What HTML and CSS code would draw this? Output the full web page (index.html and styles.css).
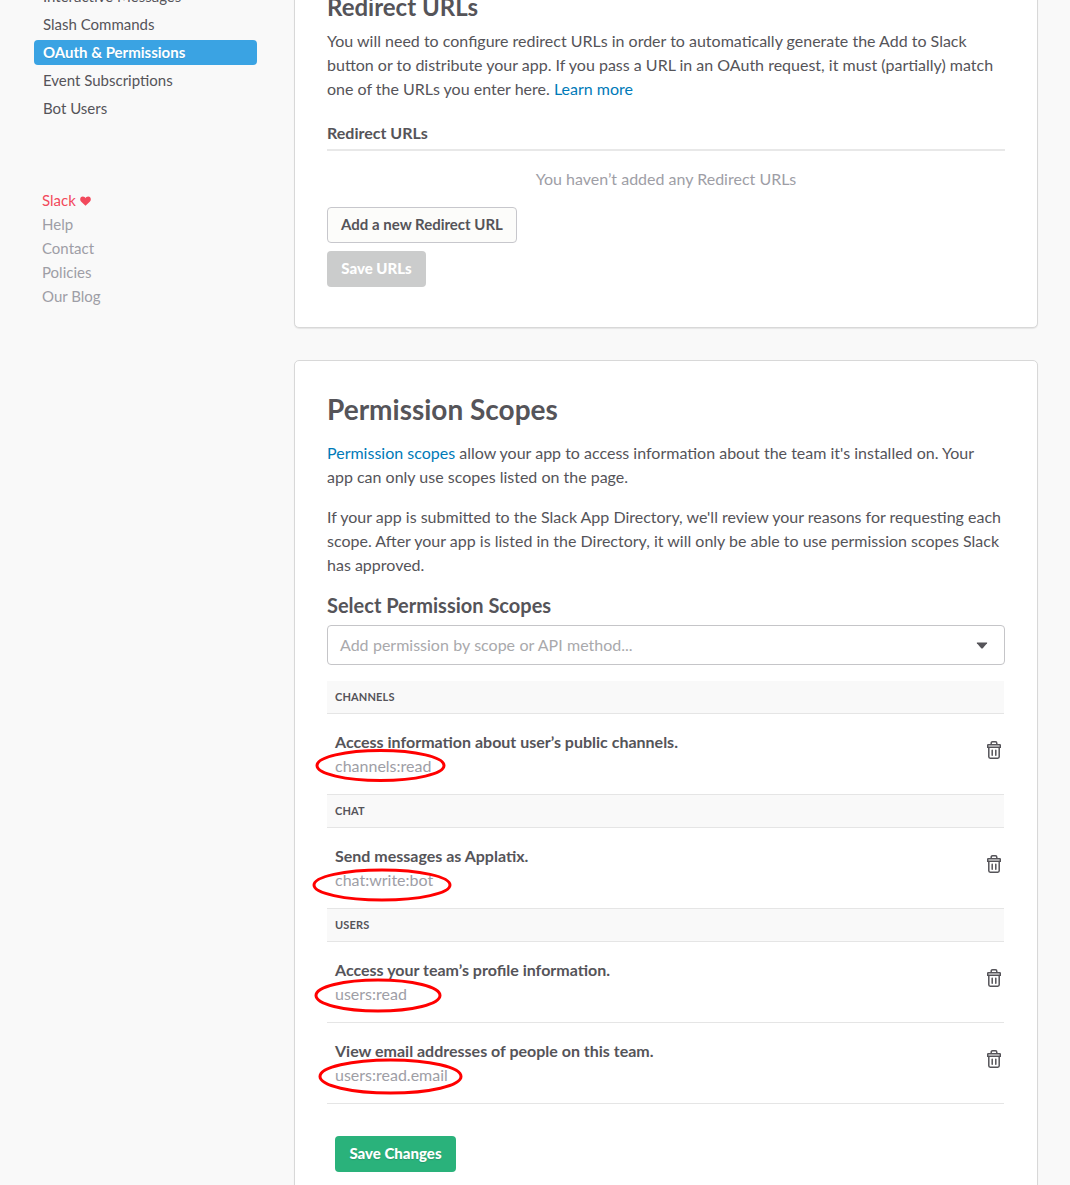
FILE: index.html
```html
<!DOCTYPE html>
<html lang="en">
<head>
<meta charset="utf-8">
<title>OAuth &amp; Permissions</title>
<link rel="stylesheet" href="styles.css">
</head>
<body>
<svg class="defs" width="0" height="0" aria-hidden="true">
  <symbol id="trash" viewBox="0 0 14 18">
    <path d="M4.2 3.4V2.2q0-1.4 1.4-1.4h2.8q1.4 0 1.4 1.4v1.2M1.3 3.7h11.4q.6 0 .6.6v1.9H.7V4.3q0-.6.6-.6zM1.8 6.2v9.6q0 1.4 1.4 1.4h7.6q1.4 0 1.4-1.4V6.2M5.2 9.3v5M8.800 9.3v5" fill="none" stroke="currentColor" stroke-width="1.5" stroke-linecap="round"/>
  </symbol>
</svg>
<div class="page">
  <aside class="sidebar">
    <nav class="nav">
      <a class="nav-item">Interactive Messages</a>
      <a class="nav-item">Slash Commands</a>
      <a class="nav-item active">OAuth &amp; Permissions</a>
      <a class="nav-item">Event Subscriptions</a>
      <a class="nav-item">Bot Users</a>
    </nav>
    <div class="links">
      <a class="love">Slack <svg class="heart" width="11" height="10" viewBox="0 0 11 10"><path d="M5.5 9.8 1 5.4C-.6 3.600.2.500 2.800.5 4.200.5 5.100 1.300 5.500 2.200 5.900 1.300 6.800.5 8.200.5c2.600 0 3.400 3.100 1.800 4.900z" fill="currentColor"/></svg></a>
      <a>Help</a>
      <a>Contact</a>
      <a>Policies</a>
      <a>Our Blog</a>
    </div>
  </aside>
  <main class="main">
    <section class="card card-urls">
      <h2 class="title">Redirect URLs</h2>
      <p class="text">You will need to configure redirect URLs in order to automatically generate the Add to Slack<br>button or to distribute your app. If you pass a URL in an OAuth request, it must (partially) match<br>one of the URLs you enter here. <a class="link">Learn more</a></p>
      <h4 class="list-title">Redirect URLs</h4>
      <p class="empty">You haven’t added any Redirect URLs</p>
      <div class="buttons">
        <button class="btn btn-outline">Add a new Redirect URL</button>
        <button class="btn btn-disabled">Save URLs</button>
      </div>
    </section>
    <section class="card card-scopes">
      <h2 class="title">Permission Scopes</h2>
      <p class="text"><a class="link">Permission scopes</a> allow your app to access information about the team it's installed on. Your<br>app can only use scopes listed on the page.</p>
      <p class="text">If your app is submitted to the Slack App Directory, we'll review your reasons for requesting each<br>scope. After your app is listed in the Directory, it will only be able to use permission scopes Slack<br>has approved.</p>
      <h3 class="subtitle">Select Permission Scopes</h3>
      <div class="select"><span>Add permission by scope or API method...</span><svg width="12" height="7" viewBox="0 0 12 7"><path d="M1.200.500h9.600q.7 0 .3.700L7 6q-1 1-2 0L.9 1.200Q.500.500 1.200.500z" fill="#555459"/></svg></div>
      <div class="scopes">
        <div class="group">CHANNELS</div>
        <div class="row"><div><div class="name">Access information about user’s public channels.</div><div class="scope">channels:read</div></div><svg class="trash"><use href="#trash"/></svg></div>
        <div class="group">CHAT</div>
        <div class="row"><div><div class="name">Send messages as Applatix.</div><div class="scope">chat:write:bot</div></div><svg class="trash"><use href="#trash"/></svg></div>
        <div class="group">USERS</div>
        <div class="row"><div><div class="name">Access your team’s profile information.</div><div class="scope">users:read</div></div><svg class="trash"><use href="#trash"/></svg></div>
        <div class="row"><div><div class="name">View email addresses of people on this team.</div><div class="scope">users:read.email</div></div><svg class="trash"><use href="#trash"/></svg></div>
      </div>
      <button class="btn btn-save">Save Changes</button>
    </section>
  </main>
  <svg class="marks" width="1070" height="1185" viewBox="0 0 1070 1185">
    <ellipse cx="380.500" cy="765.500" rx="63.500" ry="15"/>
    <ellipse cx="382" cy="885" rx="68" ry="15"/>
    <ellipse cx="378" cy="995.500" rx="62" ry="15.500"/>
    <ellipse cx="390.500" cy="1076.500" rx="70.500" ry="16.500"/>
  </svg>
</div>
</body>
</html>
```

FILE: styles.css
```css
* { box-sizing: border-box; }
body {
  margin: 0;
  background: #f9f9f9;
  color: #555459;
  font: 16px/24px Lato, "Liberation Sans", sans-serif;
}
h2, h3, h4, p { margin: 0; }
.defs { position: absolute; }
.page {
  position: relative;
  display: flex;
  width: 1070px;
  height: 1185px;
  overflow: hidden;
}
.sidebar { width: 294px; padding-left: 34px; font-size: 15px; }
.nav { display: flex; flex-direction: column; gap: 3px; width: 223px; margin-top: -16px; }
.nav-item { height: 25px; padding-left: 9px; line-height: 25px; border-radius: 4px; }
.nav-item.active {
  background: #3aa3e3;
  color: #fff;
  font-weight: 700;
  text-shadow: 0 1px 0 rgba(0, 0, 0, .1);
}
.links { display: flex; flex-direction: column; margin-top: 67px; padding-left: 8px; color: #9e9ea6; }
.links .love { color: #f2495c; }
.heart { vertical-align: 0; }
.main { width: 744px; }
.card {
  padding: 32px;
  background: #fff;
  border: 1px solid #d8d8d8;
  border-radius: 5px;
  box-shadow: 0 1px 1px rgba(0, 0, 0, .08);
}
.card-urls { height: 388px; margin-top: -60px; margin-bottom: 32px; padding-top: 50px; }
.card-scopes { height: 900px; }
.title { font-size: 28px; line-height: 32px; font-weight: 700; }
.card-urls .title { margin-bottom: 6px; font-size: 24px; }
.card-scopes .title { margin-bottom: 16px; }
.text { white-space: nowrap; }
.text + .text { margin-top: 16px; }
.link { color: #007ab8; }
.list-title { height: 30px; margin-top: 20px; border-bottom: 2px solid #e8e8e8; font-size: 16px; font-weight: 700; }
.empty { margin-top: 16px; color: #9e9ea6; text-align: center; }
.buttons { display: flex; flex-direction: column; align-items: flex-start; gap: 8px; margin-top: 16px; }
.btn {
  height: 36px;
  padding: 0 14px 2px;
  border: 0;
  border-radius: 4px;
  font: 900 15px/34px Lato, "Liberation Sans", sans-serif;
  color: #fff;
  white-space: nowrap;
}
.btn-outline { width: 190px; padding: 0 13px 2px; border: 1px solid #c7c7cc; background: #fcfcfa; color: #555459; font-weight: 700; line-height: 32px; }
.btn-disabled { width: 99px; background: #cbcccc; }
.btn-save { width: 121px; margin: 32px 0 0 8px; background: #2ab27b; text-shadow: 0 1px 1px rgba(0, 0, 0, .15); }
.subtitle { margin-top: 16px; margin-bottom: 8px; font-size: 20px; line-height: 24px; font-weight: 700; }
.select {
  display: flex;
  align-items: center;
  justify-content: space-between;
  height: 40px;
  margin-bottom: 16px;
  padding: 0 16px 0 12px;
  border: 1px solid #c5c5c8;
  border-radius: 4px;
  color: #a9a9ac;
}
.select span { word-spacing: .25px; }
.scopes { width: 677px; }
.group {
  height: 33px;
  padding-left: 8px;
  border-bottom: 1px solid #e5e5e5;
  background: #f9f9f9;
  font-size: 11px;
  line-height: 32px;
  font-weight: 700;
  letter-spacing: .15px;
}
.row {
  display: flex;
  justify-content: space-between;
  height: 81px;
  padding: 16px 3px 0 8px;
  border-bottom: 1px solid #e5e5e5;
}
.name { font-weight: 700; }
.scope { color: #9e9ea6; }
.trash { width: 14px; height: 18px; margin-top: 11px; }
.marks { position: absolute; left: 0; top: 0; fill: none; stroke: #f00; stroke-width: 3; }
```
